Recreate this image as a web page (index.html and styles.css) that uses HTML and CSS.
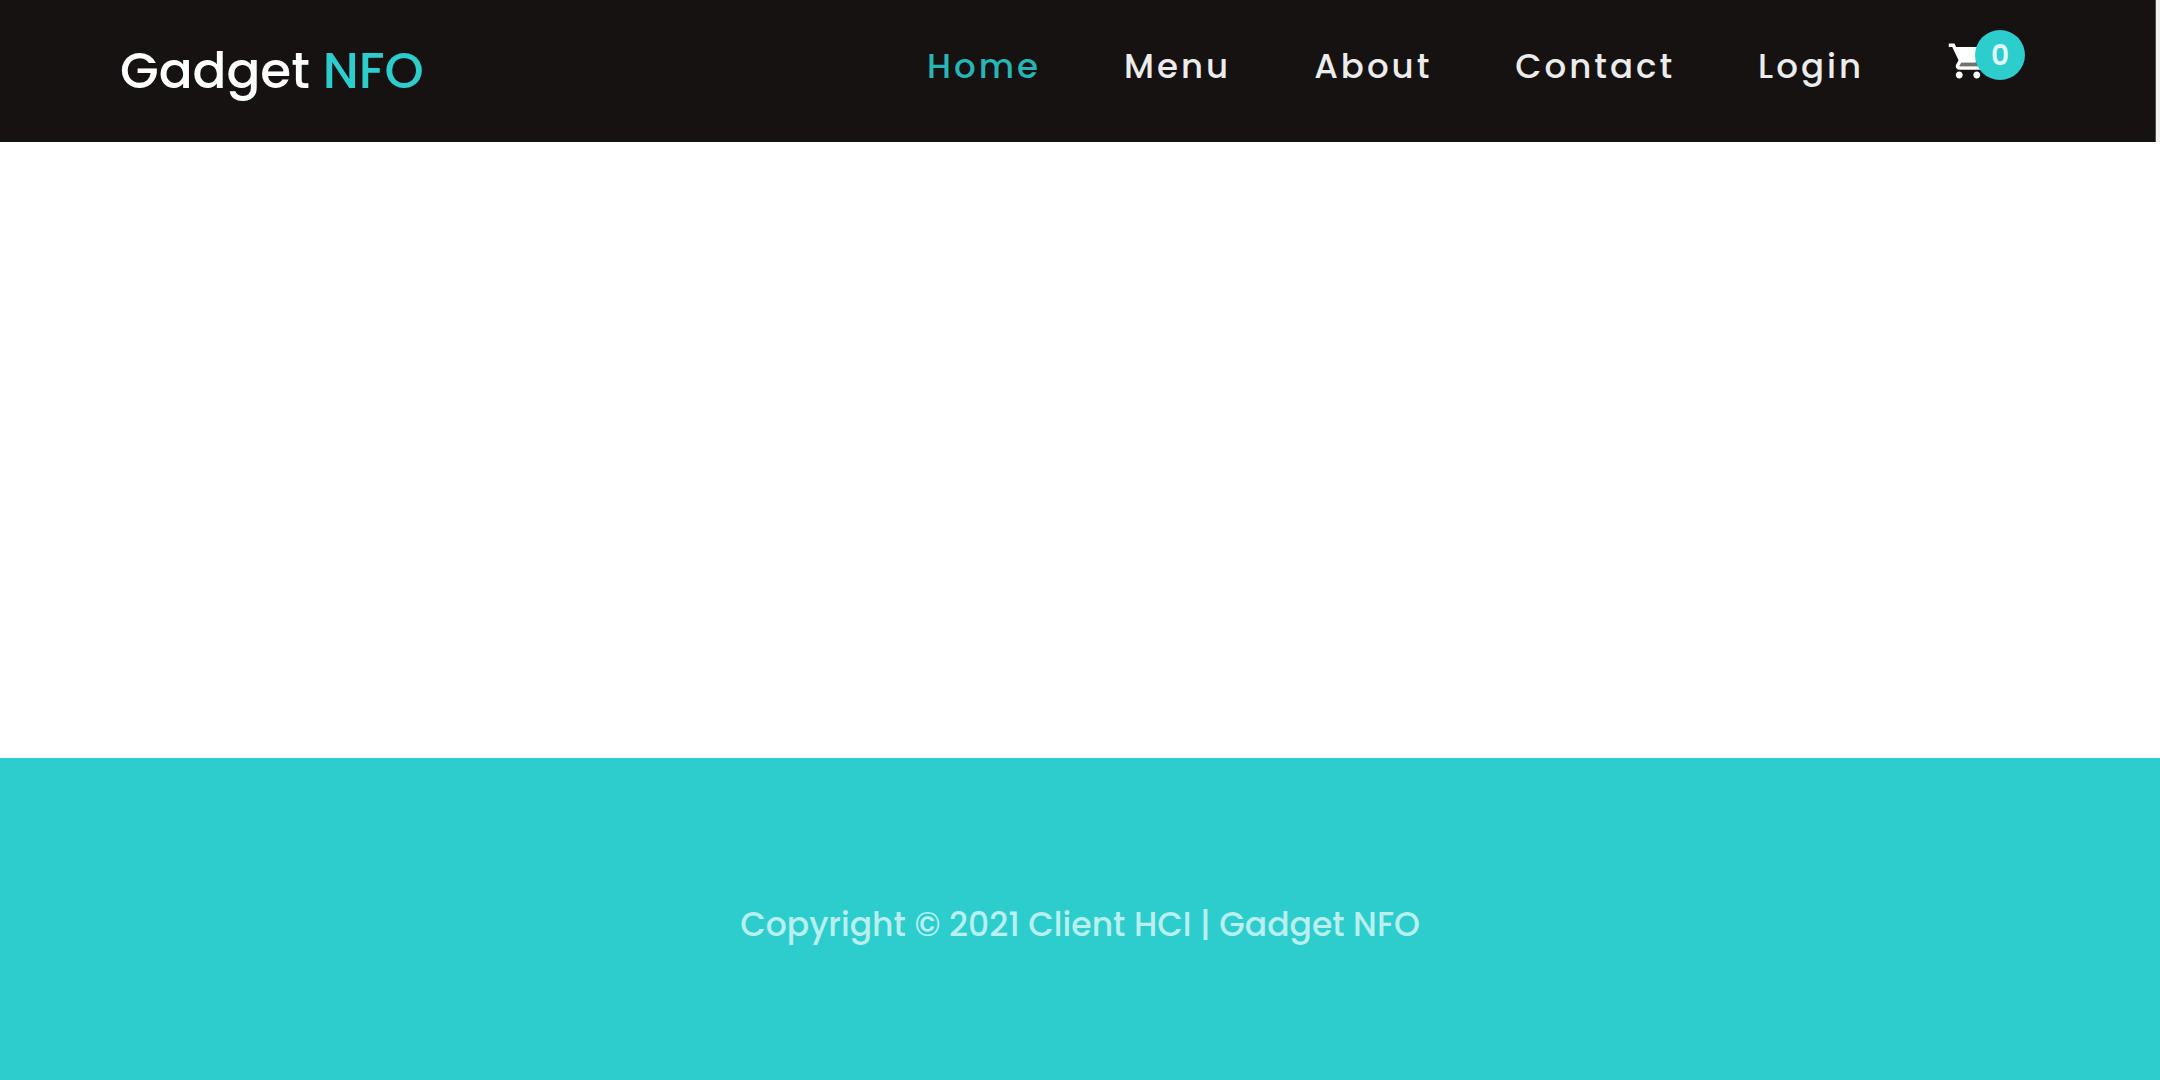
FILE: index.html
```html
<!DOCTYPE html>
<html lang="en">
<head>
<meta charset="utf-8">
<meta name="viewport" content="width=device-width, initial-scale=1">
<title>Gadget NFO</title>
<link rel="stylesheet" href="styles.css">
</head>
<body>
<div class="top">
  <header class="navbar">
    <a class="brand" href="#">Gadget <span class="brand-accent">NFO</span></a>
    <nav class="nav" aria-label="Main">
      <a class="nav-link active" href="#" aria-current="page">Home</a>
      <a class="nav-link" href="#">Menu</a>
      <a class="nav-link" href="#">About</a>
      <a class="nav-link" href="#">Contact</a>
      <a class="nav-link" href="#">Login</a>
      <a class="cart" href="#" aria-label="Cart">
        <svg class="cart-icon" viewBox="0 0 24 24" aria-hidden="true"><path fill="currentColor" d="M7 18c-1.100 0-1.990.9-1.990 2S5.900 22 7 22s2-.9 2-2-.9-2-2-2zM1 2v2h2l3.600 7.590-1.350 2.450c-.16.280-.25.610-.25.960 0 1.100.9 2 2 2h12v-2H7.420c-.14 0-.25-.11-.25-.25l.03-.12.900-1.630h7.450c.75 0 1.410-.41 1.750-1.030l3.580-6.490A1 1 0 0 0 20 4H5.210l-.94-2H1zm16 16c-1.100 0-1.990.9-1.990 2s.89 2 1.990 2 2-.9 2-2-.9-2-2-2z"/><path fill="currentColor" opacity=".4" d="M7.500 13H19v2H7.200z"/></svg>
        <span class="badge">0</span>
      </a>
    </nav>
  </header>
</div>
<main class="content"></main>
<footer class="footer">
  <p class="copyright">Copyright © 2021 Client HCI | Gadget NFO</p>
</footer>
</body>
</html>
```

FILE: styles.css
```css
* {
  box-sizing: border-box;
}

body {
  display: flex;
  flex-direction: column;
  min-height: 100vh;
  margin: 0;
  background: #fff;
  font-family: Poppins, Inter, "Open Sans", sans-serif;
}

a {
  color: inherit;
  text-decoration: none;
}

.top {
  padding-right: 4px;
  background: #f0f0f0;
}

.navbar {
  display: flex;
  justify-content: space-between;
  align-items: flex-start;
  height: 142px;
  padding: 40px 130px 0 120px;
  border-right: 1px solid #555152;
  background: #161211;
  color: #fff;
}

.brand {
  font-size: 50px;
  font-weight: 500;
  line-height: 62px;
}

.brand-accent {
  color: #2dcdcd;
}

.nav {
  display: flex;
  gap: 83px;
}

.nav-link {
  color: #ececec;
  font-size: 34px;
  font-weight: 500;
  line-height: 52px;
  letter-spacing: 3px;
}

.nav-link.active {
  color: #27b5b5;
}

.cart {
  position: relative;
  width: 78px;
  height: 42px;
}

.cart-icon {
  display: block;
  width: 42px;
  height: 42px;
}

.badge {
  position: absolute;
  top: -10px;
  right: 0;
  width: 50px;
  height: 50px;
  border-radius: 50%;
  background: #2dcdcd;
  color: #e0f8f8;
  font-size: 28px;
  font-weight: 600;
  line-height: 52px;
  text-align: center;
}

.content {
  flex: 1;
}

.footer {
  padding: 146px 24px 134px;
  background: #2dcdcd;
}

.copyright {
  margin: 0;
  color: #b9efef;
  font-size: 33px;
  font-weight: 500;
  line-height: 42px;
  text-align: center;
}
```
